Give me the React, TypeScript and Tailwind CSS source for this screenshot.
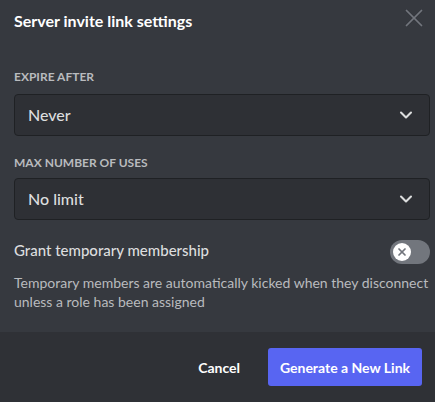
import { ChevronDown, X } from 'lucide-react'

function Select({ value }: { value: string }) {
  return (
    <div className="flex h-[42px] items-center justify-between rounded-[4px] border border-[#1f2124] bg-[#2e3035] pl-[13px] pr-[13px]">
      <span className="text-[16px] font-medium text-[#dcddde]">{value}</span>
      <ChevronDown className="text-[#dcddde]" size={20} strokeWidth={2.5} />
    </div>
  )
}

export default function App() {
  return (
    <div className="flex h-[402px] w-[435px] flex-col bg-[#36393f] font-['Lato','Noto_Sans',sans-serif]">
      <div className="flex-1 pl-[14px] pr-[5px]">
        <div className="flex items-start justify-between pt-[11px] pr-[1px]">
          <h2 className="text-[16px] font-bold leading-[20px] text-white">Server invite link settings</h2>
          <X className="mt-[-8px] text-[#72767d]" size={30} strokeWidth={1.4} />
        </div>

        <div className="mt-[36px] mb-[9px] text-[12px] font-bold uppercase leading-[16px] text-[#b9bbbe]">Expire after</div>
        <Select value="Never" />

        <div className="mt-[19px] mb-[7px] text-[12px] font-bold uppercase leading-[16px] text-[#b9bbbe]">Max number of uses</div>
        <Select value="No limit" />

        <div className="mt-[20px] flex h-[24px] items-center justify-between">
          <span className="-mt-[4px] text-[15px] font-medium text-[#dcddde]">Grant temporary membership</span>
          <div className="flex h-[24px] w-[40px] items-center rounded-full bg-[#72767d] px-[3px]">
            <div className="flex h-[18px] w-[18px] items-center justify-center rounded-full bg-white">
              <X className="text-[#72767d]" size={12} strokeWidth={3.5} />
            </div>
          </div>
        </div>

        <p className="mt-[9px] text-[14px] leading-[19px] text-[#b9bbbe]">
          Temporary members are automatically kicked when they disconnect unless a role has been assigned
        </p>
      </div>

      <div className="flex h-[70px] items-center justify-end gap-[28px] bg-[#2f3136] pr-[13px]">
        <button className="text-[14px] font-bold text-white">Cancel</button>
        <button className="h-[38px] w-[154px] rounded-[3px] bg-[#5865f2] text-[14px] font-bold text-white">
          Generate a New Link
        </button>
      </div>
    </div>
  )
}
